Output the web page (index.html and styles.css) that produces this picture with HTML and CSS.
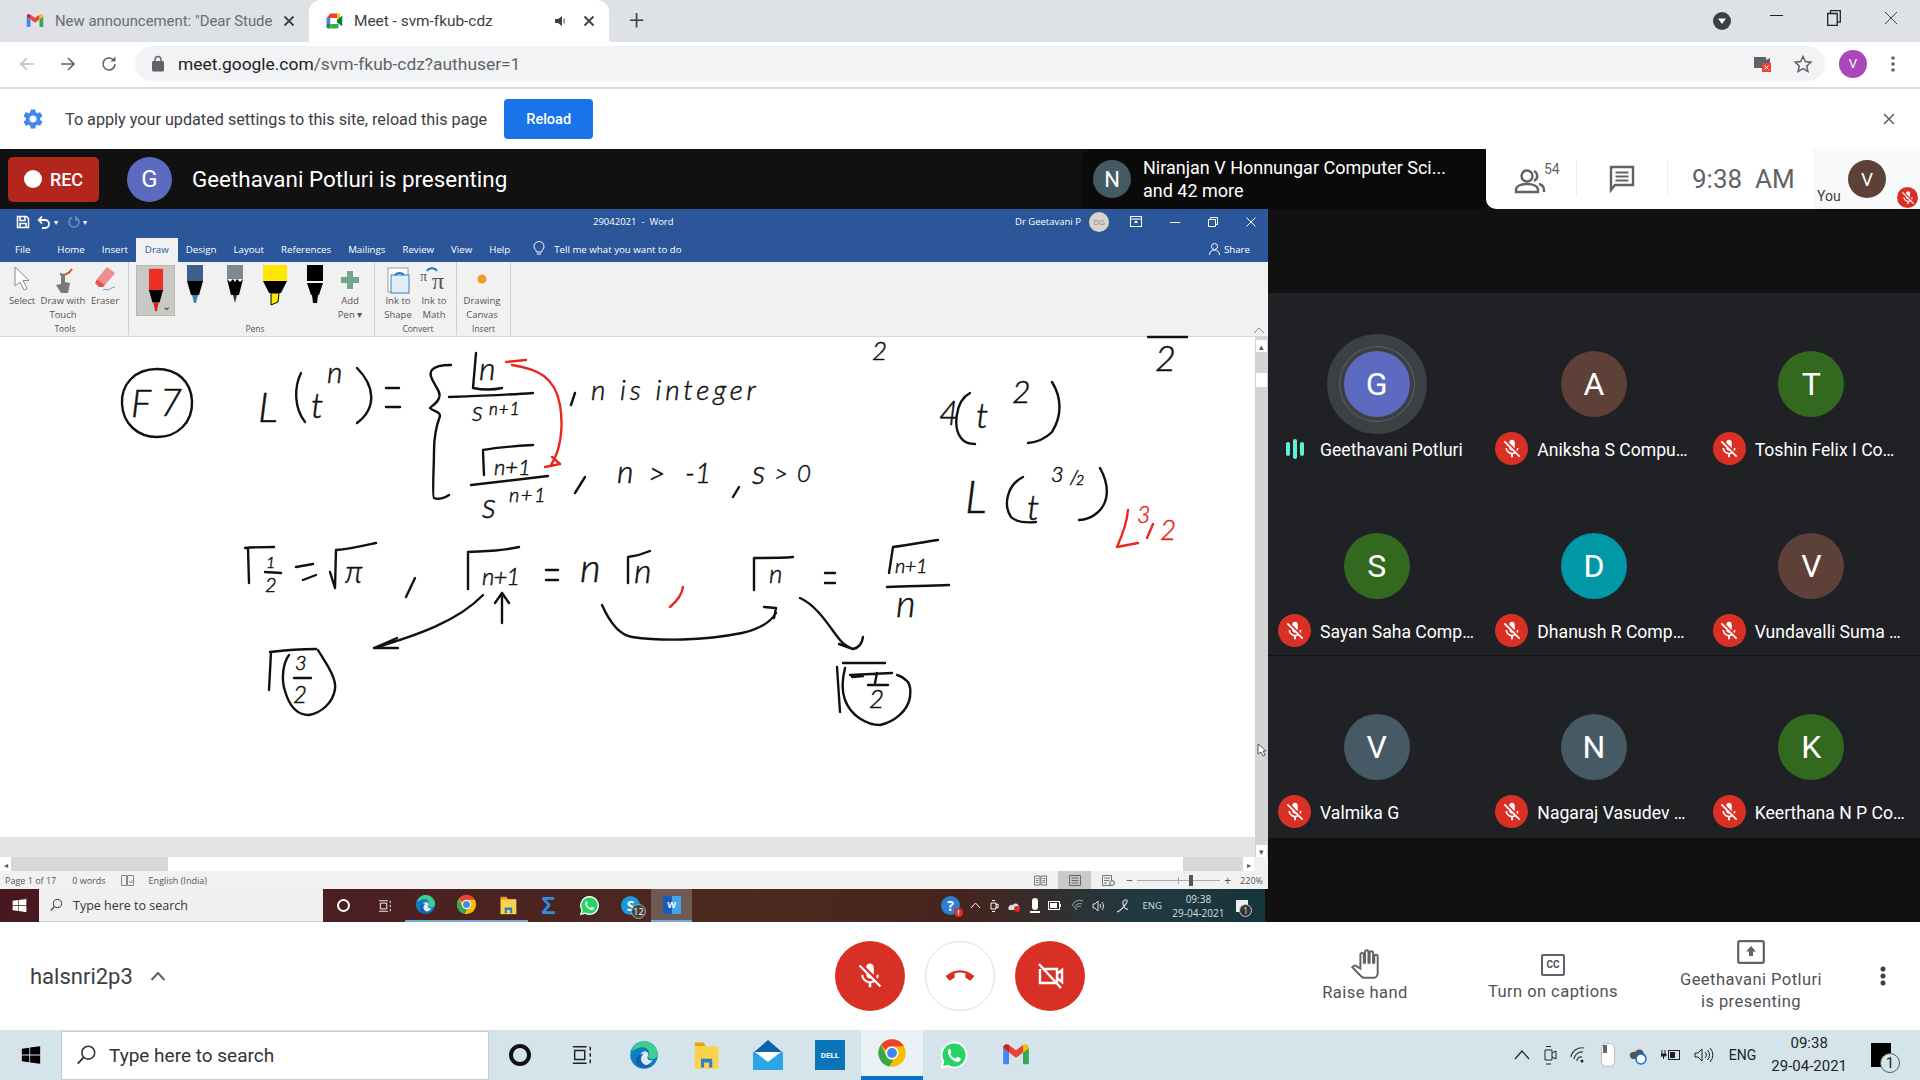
FILE: index.html
```html
<!DOCTYPE html>
<html lang="en">

<head>
    <meta charset="UTF-8">
    <title>Meet - svm-fkub-cdz</title>
    <link rel="stylesheet" href="styles.css">
</head>

<body>
    <!-- shared icons -->
    <svg class="defs" width="0" height="0">
        <symbol id="micoff" viewBox="0 0 24 24"><path fill="#fff" d="M19 11h-1.7c0 .74-.16 1.43-.43 2.05l1.23 1.23c.56-.98.9-2.09.9-3.28zm-4.02.17c0-.06.02-.11.02-.17V5c0-1.66-1.34-3-3-3S9 3.34 9 5v.18l5.98 5.99zM4.27 3L3 4.27l6.01 6.01V11c0 1.66 1.33 3 2.99 3 .22 0 .44-.03.65-.08l1.66 1.66c-.71.33-1.5.52-2.31.52-2.76 0-5.3-2.1-5.3-5.1H5c0 3.41 2.72 6.23 6 6.72V21h2v-3.28c.91-.13 1.77-.45 2.54-.9L19.73 21 21 19.73 4.27 3z"/></symbol>
        <symbol id="win" viewBox="0 0 24 24"><path fill="currentColor" d="M1 4.5l9-1.3v8.2H1zM11 3.1l12-1.7v10H11zM1 12.6h9v8.2l-9-1.3zM11 12.600h12v10l-12-1.700z"/></symbol>
        <symbol id="search" viewBox="0 0 24 24"><circle cx="14.5" cy="9.5" r="7" fill="none" stroke="currentColor" stroke-width="1.7"/><path d="M9.5 14.5L3 21.5" stroke="currentColor" stroke-width="2" fill="none"/></symbol>
        <symbol id="taskview" viewBox="0 0 24 24"><path fill="none" stroke="currentColor" stroke-width="1.6" d="M2 3h15M2 21h15M4 7h11v10H4zM21 3v4M21 10v4M21 17v4"/></symbol>
        <symbol id="edge" viewBox="0 0 24 24"><circle cx="12" cy="12" r="11" fill="#0f7dc2"/><path fill="#3dcf8e" d="M2 9C4 3 9 1 12 1c6 0 11 5 11 10 0 3-3 5-6 4-3-1-1-3-1-5 0-3-4-5-7-4-3 .7-5 2-7 3z"/><path fill="#fff" opacity=".85" d="M12 9c3 0 4 2 3 4-1 2 1 4 4 3-2 3-5 5-8 4-4-1-5-8 1-11z"/><path fill="#1360b0" d="M12 11c-2 1-3 4-2 6 1 3 5 4 8 3-3 3-8 3-11 0-3-4-1-9 5-9z"/></symbol>
        <symbol id="chrome" viewBox="0 0 24 24"><circle cx="12" cy="12" r="11" fill="#fbbc04"/><path fill="#ea4335" d="M12 1a11 11 0 0 1 9.5 5.5H12a5.5 5.5 0 0 0-5 3.2L3.3 5.4A11 11 0 0 1 12 1z"/><path fill="#34a853" d="M3.3 5.4L7.5 14.800a5.500 5.500 0 0 0 5.500 2.600L9.800 22.800A11 11 0 0 1 3.300 5.400z"/><circle cx="12" cy="12" r="5.2" fill="#fff"/><circle cx="12" cy="12" r="4" fill="#4285f4"/></symbol>
        <symbol id="folder" viewBox="0 0 24 24"><path fill="#e8a30e" d="M3 2h7l2 3H3z"/><rect x="3" y="5" width="19" height="18" fill="#fbd24e"/><path fill="#2d7fd0" d="M8 22v-7h9v7h-2.5v-4h-4v4z"/></symbol>
        <symbol id="whatsapp" viewBox="0 0 24 24"><path fill="#25d366" stroke="#fff" stroke-width="1.5" d="M12 2a10 10 0 0 0-8.500 15.200L2.200 22l4.900-1.300A10 10 0 1 0 12 2z"/><path fill="#fff" d="M8.600 6.800c-.5 0-1.500 1-1.500 2.700 0 3 3.800 7.400 7.400 7.900 1.600.2 2.800-1 3-1.900.1-.6 0-.8-.2-.9l-2.300-1.100c-.3-.1-.5 0-.7.200l-.8 1c-.2.200-.4.200-.7.100-1.800-.8-3-2-3.700-3.500-.1-.3 0-.4.100-.6l.6-.8c.1-.2.100-.4 0-.6l-1-2.200c-.1-.2-.3-.3-.7-.3z"/></symbol>
        <symbol id="gmail" viewBox="0 0 24 24"><path fill="#4285f4" d="M1 20V6l5 3.800V20z"/><path fill="#34a853" d="M18 20V9.800L23 6v14z"/><path fill="#ea4335" d="M6 9.800V3.500L12 8l6-4.500v6.300L12 14.300z"/><path fill="#c5221f" d="M1 6c0-3 3-4 5-2.500v6.300z"/><path fill="#fbbc04" d="M18 3.500C20 2 23 3 23 6l-5 3.800z"/></symbol>
        <symbol id="tabx" viewBox="0 0 12 12"><path d="M1.500 1.500l9 9M10.500 1.500l-9 9" stroke="#3c4043" stroke-width="1.800" fill="none"/></symbol>
    </svg>

    <div class="tabstrip">
        <div class="tab">
            <svg width="18" height="18"><use href="#gmail" /></svg>
            <span class="tab-title fade">New announcement: "Dear Stude</span>
            <svg class="tab-x" width="12" height="12"><use href="#tabx" /></svg>
        </div>
        <div class="tab tab-active">
            <svg width="18" height="18" viewBox="0 0 24 24">
                <path fill="#ea4335" d="M7 2h9v6H2z" />
                <path fill="#4285f4" d="M2 8h5v8H2z" />
                <path fill="#1e8e3e" d="M2 16h5v6H4c-1 0-2-1-2-2z" />
                <path fill="#fbbc04" d="M16 2h2c1 0 2 1 2 2v4h-4z" />
                <path fill="#34a853" d="M7 16h11v4c0 1-1 2-2 2H7z" />
                <path fill="#00832d" d="M16 10l7-5v14l-7-5z" />
            </svg>
            <span class="tab-title">Meet - svm-fkub-cdz</span>
            <svg class="tab-sound" width="14" height="14" viewBox="0 0 14 14"><path fill="#3c4043" d="M1 5h3l4-3v10L4 9H1z" /><path fill="none" stroke="#3c4043" d="M10 4.500v5" /></svg>
            <svg class="tab-x" width="12" height="12"><use href="#tabx" /></svg>
        </div>
        <span class="newtab">+</span>
        <span class="grow"></span>
        <svg class="profile-down" width="18" height="18" viewBox="0 0 18 18"><circle cx="9" cy="9" r="9" fill="#3c4043" /><path fill="#fff" d="M5 6.500h8L9 12z" /></svg>
        <span class="winbtn winmin"></span>
        <span class="winbtn winmax">
            <svg width="14" height="16"><path d="M.7 3.500h9.500v12H.7zM3.500 3.500V.7h9.800v11.500h-3" fill="none" stroke="#222" stroke-width="1.300" /></svg>
        </span>
        <span class="winbtn winclose">
            <svg width="16" height="16"><path d="M2 2l12 12M14 2L2 14" stroke="#3c4043" fill="none" /></svg>
        </span>
    </div>

    <div class="toolbar">
        <svg class="nav" width="18" height="18" viewBox="0 0 18 18"><path d="M16 9H3M9 3L3 9l6 6" fill="none" stroke="#bdc1c6" stroke-width="1.600" /></svg>
        <svg class="nav" width="18" height="18" viewBox="0 0 18 18"><path d="M2 9h13M9 3l6 6-6 6" fill="none" stroke="#5f6368" stroke-width="1.600" /></svg>
        <svg class="nav" width="18" height="18" viewBox="0 0 18 18"><path d="M15 9a6 6 0 1 1-1.800-4.300" fill="none" stroke="#5f6368" stroke-width="1.600" /><path fill="#5f6368" d="M15.500 1.500v5h-5z" /></svg>
        <div class="omnibox">
            <svg width="18" height="18" viewBox="0 0 24 24"><path fill="#5f6368" d="M18 8h-1V6c0-2.760-2.240-5-5-5S7 3.240 7 6v2H6c-1.100 0-2 .9-2 2v10c0 1.100.9 2 2 2h12c1.100 0 2-.9 2-2V10c0-1.100-.9-2-2-2zM9 6c0-1.660 1.340-3 3-3s3 1.340 3 3v2H9V6z" /></svg>
            <span class="url"><b>meet.google.com</b>/svm-fkub-cdz?authuser=1</span>
            <span class="grow"></span>
            <svg class="cam-blocked" width="20" height="20" viewBox="0 0 20 20"><rect x="1" y="3" width="12" height="11" fill="#5f6368" /><path fill="#5f6368" d="M13 6l4-2v8h-4z" /><rect x="9" y="9" width="9" height="9" fill="#ea4335" /><path d="M11.500 11.500l4 4M15.500 11.500l-4 4" stroke="#fff" /></svg>
            <svg class="star" width="20" height="20" viewBox="0 0 24 24"><path fill="none" stroke="#5f6368" stroke-width="1.800" d="M12 3l2.800 6.100 6.700.7-5 4.500 1.400 6.600L12 17.500l-5.900 3.400 1.400-6.600-5-4.500 6.700-.7z" /></svg>
        </div>
        <span class="chrome-avatar">V</span>
        <svg class="chrome-menu" width="4" height="16"><circle cx="2" cy="2" r="1.800" fill="#5f6368" /><circle cx="2" cy="8" r="1.800" fill="#5f6368" /><circle cx="2" cy="14" r="1.800" fill="#5f6368" /></svg>
    </div>

    <div class="infobar">
        <svg width="24" height="24" viewBox="0 0 24 24"><path fill="#4285f4" d="M19.140 12.940c.04-.3.06-.61.06-.94 0-.32-.02-.64-.07-.94l2.030-1.580c.18-.14.23-.41.12-.61l-1.920-3.320c-.12-.22-.37-.29-.59-.22l-2.390.96c-.5-.38-1.030-.7-1.620-.94l-.36-2.540c-.04-.24-.24-.41-.48-.41h-3.840c-.24 0-.43.17-.47.41l-.36 2.540c-.59.24-1.130.57-1.620.94l-2.390-.96c-.22-.08-.47 0-.59.22L2.740 8.870c-.12.21-.08.47.12.61l2.030 1.580c-.05.3-.09.63-.09.94s.02.64.07.94l-2.030 1.580c-.18.14-.23.41-.12.61l1.920 3.320c.12.22.37.29.59.22l2.390-.96c.5.38 1.030.7 1.620.94l.36 2.540c.05.24.24.41.48.41h3.840c.24 0 .44-.17.47-.41l.36-2.540c.59-.24 1.130-.56 1.620-.94l2.390.96c.22.08.47 0 .59-.22l1.920-3.320c.12-.22.07-.47-.12-.61l-2.010-1.580zM12 15.600c-1.980 0-3.600-1.620-3.600-3.600s1.620-3.600 3.600-3.600 3.600 1.620 3.600 3.600-1.620 3.600-3.600 3.600z" /></svg>
        <span class="info-text">To apply your updated settings to this site, reload this page</span>
        <button class="reload">Reload</button>
        <span class="grow"></span>
        <svg class="info-x" width="12" height="12"><path d="M1 1l10 10M11 1L1 11" stroke="#5f6368" stroke-width="1.600" fill="none" /></svg>
    </div>

    <div class="meetbar">
        <div class="rec"><span class="rec-dot"></span>REC</div>
        <span class="presenter-avatar">G</span>
        <span class="presenter-text">Geethavani Potluri is presenting</span>
        <span class="grow"></span>
        <div class="joined">
            <span class="joined-avatar">N</span>
            <div class="joined-text">
                <div>Niranjan V Honnungar Computer Sci...</div>
                <div>and 42 more</div>
            </div>
        </div>
        <div class="info-panel">
            <div class="people">
                <svg width="32" height="28" viewBox="0 0 32 28"><circle cx="13" cy="9" r="5.500" fill="none" stroke="#5f6368" stroke-width="2.400" /><path d="M2 25v-2c0-4 5-6 11-6s11 2 11 6v2z" fill="none" stroke="#5f6368" stroke-width="2.400" /><path d="M20 4a5.500 5.500 0 0 1 0 10M25 17c3 .8 5 3 5 6v2" fill="none" stroke="#5f6368" stroke-width="2.400" /></svg>
                <span class="people-count">54</span>
            </div>
            <div class="chat">
                <svg width="26" height="28" viewBox="0 0 26 28"><path d="M2 2h22v18H6l-4 5z" fill="none" stroke="#5f6368" stroke-width="2.400" /><path d="M6.500 7.500h13M6.500 11.500h13M6.500 15.500h13" stroke="#5f6368" stroke-width="2" /></svg>
            </div>
            <div class="clock">9:38&nbsp; AM</div>
            <div class="self">
                <span class="self-you">You</span>
                <span class="self-avatar">V</span>
                <span class="self-mic"><svg width="16" height="16"><use href="#micoff" /></svg></span>
            </div>
        </div>
    </div>

    <div class="stage">
        <div class="present">
            <div class="word-title">
                <svg class="qat" width="14" height="14" viewBox="0 0 14 14"><path fill="none" stroke="#fff" stroke-width="1.500" d="M1.500 1.500h9l2 2v9h-11zM4 1.500v4h5v-4M4 12.500v-4h6v4" /></svg>
                <svg class="qat" width="14" height="14" viewBox="0 0 14 14"><path fill="none" stroke="#fff" stroke-width="1.800" d="M2 5h6a4 4 0 0 1 0 8H5M5 1.500L1.800 5 5 8.500" /></svg>
                <span class="qat-small">&#9662;</span>
                <svg class="qat" width="12" height="14" viewBox="0 0 12 14"><path fill="none" stroke="#6f8fc0" stroke-width="1.500" d="M8 2.500a5 5 0 1 1-4 0M8 1v4h3" /></svg>
                <span class="qat-small">&#9662;</span>
                <span class="word-doc">29042021&nbsp; -&nbsp; Word</span>
                <span class="word-user">Dr Geetavani P</span>
                <span class="word-dg">DG</span>
                <svg class="word-ctl ctl-first" width="12" height="11"><rect x=".5" y=".5" width="11" height="10" fill="none" stroke="#fff" /><path d="M1 3h10" stroke="#fff" /><path d="M6 4l-2 3h4z" fill="#fff" /></svg>
                <svg class="word-ctl" width="10" height="10"><path d="M0 5.500h10" stroke="#fff" /></svg>
                <svg class="word-ctl" width="10" height="10"><path d="M.5 2.500h7v7h-7zM2.500 2.500v-2h7v7h-2" stroke="#fff" fill="none" /></svg>
                <svg class="word-ctl" width="10" height="10"><path d="M.5.5l9 9M9.500.5l-9 9" stroke="#fff" fill="none" /></svg>
            </div>
            <div class="word-tabs">
                <span class="wt wt-file">File</span>
                <span class="wt">Home</span>
                <span class="wt">Insert</span>
                <span class="wt wt-on">Draw</span>
                <span class="wt">Design</span>
                <span class="wt">Layout</span>
                <span class="wt">References</span>
                <span class="wt">Mailings</span>
                <span class="wt">Review</span>
                <span class="wt">View</span>
                <span class="wt">Help</span>
                <svg class="bulb" width="12" height="15" viewBox="0 0 12 15"><path d="M3.500 11C3 8.500 1 8 1 5.500a5 5 0 0 1 10 0c0 2.500-2 3-2.500 5.500zM4 13h4" fill="none" stroke="#fff" /></svg>
                <span class="wt-tell">Tell me what you want to do</span>
                <span class="grow"></span>
                <svg class="share-icon" width="11" height="12" viewBox="0 0 11 12"><circle cx="5.500" cy="3.500" r="3" fill="none" stroke="#fff" /><path d="M.5 12c0-3 2-5 5-5s5 2 5 5" fill="none" stroke="#fff" /></svg>
                <span class="wt-share">Share</span>
            </div>
            <div class="ribbon">
                <div class="rgroup rg-tools">
                    <div class="rg-items">
                        <div class="ritem ri-40">
                            <svg width="18" height="30" viewBox="0 0 18 30"><path d="M2 2v19l5-4 4 8 3-1.500-4-8h6z" fill="#fff" stroke="#888" /></svg>
                            <span>Select</span>
                        </div>
                        <div class="ritem ri-42">
                            <svg width="24" height="30" viewBox="0 0 24 30"><path d="M9 9c4 2 9 0 12-5" fill="none" stroke="#d2532d" stroke-width="2" /><path d="M10 9v10l-5 1 5 8h7l2-10-5-1V9z" fill="#7a7a7a" /></svg>
                            <span>Draw with<br>Touch</span>
                        </div>
                        <div class="ritem ri-42">
                            <svg width="24" height="30" viewBox="0 0 24 30"><path d="M14 2l8 6-10 12-8-6z" fill="#ee8d8d" /><path d="M4 14l8 6-2 2H6l-4-4z" fill="#e05252" /><path d="M10 25c3-2 5 1 7-1s3-1 5-2" fill="none" stroke="#6a9cc8" /></svg>
                            <span>Eraser</span>
                        </div>
                    </div>
                    <div class="rg-label">Tools</div>
                </div>
                <div class="rgroup rg-pens">
                    <div class="rg-items">
                        <div class="pen pen-on">
                            <svg width="24" height="46" viewBox="0 0 24 52"><rect x="4" y="2" width="16" height="24" fill="#ee2f24" /><path d="M4 26h16l-4 14H8z" fill="#000" /><path d="M9 40h6l-2 10h-2z" fill="#d4241a" /></svg>
                            <span class="pen-arrow">&#8964;</span>
                        </div>
                        <div class="pen">
                            <svg width="24" height="44" viewBox="0 0 24 44"><rect x="4" y="0" width="16" height="16" fill="#3a5f8c" /><path d="M4 16h16l-4 14H8z" fill="#000" /><path d="M9 30h6l-2 8h-2z" fill="#2f8aa8" /></svg>
                        </div>
                        <div class="pen">
                            <svg width="24" height="44" viewBox="0 0 24 44"><rect x="4" y="0" width="16" height="14" fill="#7c8a90" /><path d="M4 14l3 3 3-3 2 3 2-3 3 3 3-3-4 16H8z" fill="#000" /><path d="M10 30h4l-2 8z" fill="#333" /></svg>
                        </div>
                        <div class="pen">
                            <svg width="28" height="44" viewBox="0 0 28 44"><rect x="2" y="0" width="24" height="16" fill="#ffe800" /><path d="M2 16h24l-6 12H8z" fill="#000" /><path d="M10 28h8l-1 9-7 3z" fill="#ffe800" stroke="#000" /></svg>
                        </div>
                        <div class="pen">
                            <svg width="24" height="44" viewBox="0 0 24 44"><rect x="4" y="0" width="16" height="16" fill="#000" /><path d="M4 18h16l-4 12H8z" fill="#000" /><path d="M9 30h6l-1 8h-4z" fill="#000" /></svg>
                        </div>
                        <div class="ritem ri-30 addpen">
                            <svg width="18" height="30" viewBox="0 0 18 30"><path d="M6 6h6v6h6v6h-6v6H6v-6H0v-6h6z" fill="#6fa78f" /></svg>
                            <span>Add<br>Pen &#9662;</span>
                        </div>
                    </div>
                    <div class="rg-label">Pens</div>
                </div>
                <div class="rgroup rg-convert">
                    <div class="rg-items">
                        <div class="ritem ri-36">
                            <svg width="26" height="30" viewBox="0 0 26 30"><rect x="3" y="3" width="20" height="24" fill="#fff" stroke="#9a9a9a" /><rect x="6" y="10" width="18" height="18" fill="#dfeef9" stroke="#3a7fc2" /><path d="M10 10a6 6 0 0 1 9 0" fill="none" stroke="#2f77bd" stroke-width="2" /></svg>
                            <span>Ink to<br>Shape</span>
                        </div>
                        <div class="ritem ri-36">
                            <svg class="ink-math" width="30" height="30" viewBox="0 0 30 30"><text class="pi-big" x="13" y="24">&#960;</text><text class="pi-small" x="1" y="16">&#960;</text><path d="M8 6a6 6 0 0 1 10 0" fill="none" stroke="#2f77bd" stroke-width="2" /></svg>
                            <span>Ink to<br>Math</span>
                        </div>
                    </div>
                    <div class="rg-label">Convert</div>
                </div>
                <div class="rgroup rg-insert">
                    <div class="rg-items">
                        <div class="ritem ri-50">
                            <svg width="18" height="30" viewBox="0 0 18 30"><circle cx="9" cy="14" r="4.500" fill="#f59a23" /></svg>
                            <span>Drawing<br>Canvas</span>
                        </div>
                    </div>
                    <div class="rg-label">Insert</div>
                </div>
                <span class="grow"></span>
                <svg class="ribbon-up" width="12" height="7"><path d="M1 6l5-5 5 5" fill="none" stroke="#8a8a8a" /></svg>
            </div>
            <div class="doc">
                <!-- the ink on the page: strokes are drawn, the letters stay text -->
                <svg class="ink" width="1255" height="500" viewBox="0 337 1255 500">
                    <g class="stroke">
                        <path d="M157 369c-22 0-36 15-35 35 1 20 16 33 35 33 20 0 36-14 35-36-1-20-15-32-35-32z" />
                        <path d="M301 373c-7 14-7 35 4 49M357 368c18 18 20 40 0 55" />
                        <path d="M386 388h13M386 407h14" />
                        <path d="M451 365c-22 0-22 8-19 14 3 7 10 14 7 19-2 6-9 9-9 10 4 4 10 3 10 8-3 8-6 22-6 35 0 16-2 46 0 47 4 2 11 0 15-3" />
                        <path d="M476 353l-3 35c10 2 20 2 29 0" />
                        <path d="M449 397c28-1 56-2 84-4" />
                        <path d="M483 452l1 23M483 450c17-3 33-4 50-5" />
                        <path d="M471 485c26-3 52-6 77-9" />
                        <path d="M575 393l-4 12M585 477l-10 16M739 487l-6 10" />
                        <path d="M245 548c10-1 19-1 29-1M248 548l1 35" />
                        <path d="M265 572c5 0 12 1 16 1" />
                        <path d="M296 567l17-3M303 580l13-5" />
                        <path d="M330 572l5 16 1-38c13-1 26-4 40-7" />
                        <path d="M415 578l-9 19" />
                        <path d="M468 589V552c17-1 34-1 51-5" />
                        <path d="M546 570h12M546 580h12" />
                        <path d="M628 583V557c8-1 15-3 22-6" />
                        <path d="M754 590V558c14 0 27 0 39-1" />
                        <path d="M825 573h10M825 583h10" />
                        <path d="M502 623V593M495 603l7-10 7 10" />
                        <path d="M483 595c-25 26-65 40-109 53M397 638l-23 10 24 0" />
                        <path d="M602 605c8 18 17 30 30 32 28 4 70 4 110-4 18-4 28-10 34-20M764 607l12 1-2 10" />
                        <path d="M800 598c18 8 30 30 40 42 4 5 8 7 13 9 5-1 9-5 10-12M839 644l14 5" />
                        <path d="M270 652c16-2 32-3 46-3M271 652l-2 38" />
                        <path d="M289 655c-6 8-8 24-4 36 4 14 12 24 24 24 12-2 24-12 26-26 2-12-12-30-17-39" />
                        <path d="M294 678h17" />
                        <path d="M843 663h42M837 667l3 45" />
                        <path d="M845 668c-3 12-3 24 0 32 6 16 22 25 35 25 14-3 28-14 30-28 1-8 0-12-2-15-3-3-7-6-11-7" />
                        <path d="M852 677l11-1M850 675l42-2M877 673l-2 10M868 685h20" />
                        <path d="M1148 337h39" />
                        <path d="M970 393c-15 8-17 35-9 45 3 4 8 6 14 6M1052 382c10 16 10 34 0 50-6 6-14 10-24 11" />
                        <path d="M1023 477c-16 8-20 28-12 40 5 5 14 6 25 5M1100 468c10 18 9 35-3 45-6 5-12 7-18 7" />
                        <path d="M887 587c20-1 40-1 62-2M889 573l4-26c16-2 30-5 45-7" />
                    </g>
                    <g class="stroke stroke-red">
                        <path d="M506 362l20-2M512 365c26 4 43 12 48 40 4 24 0 46-9 60M545 467l15-3-8-7" />
                        <path d="M683 587c-1 8-6 14-13 20" />
                        <path d="M1128 510c-1 12-7 28-11 37l21-4" />
                        <path d="M1147 538l6-14" />
                    </g>
                    <g class="letters">
                        <text x="131" y="417" font-size="38">F</text>
                        <text x="160" y="416" font-size="38">7</text>
                        <text x="258" y="422" font-size="42">L</text>
                        <text x="311" y="418" font-size="36">t</text>
                        <text x="327" y="383" font-size="30">n</text>
                        <text x="479" y="380" font-size="32">n</text>
                        <text x="472" y="421" font-size="28">s</text>
                        <text x="489" y="415" font-size="17" letter-spacing="1">n+1</text>
                        <text x="591" y="400" font-size="28" letter-spacing="3.8">n is integer</text>
                        <text x="494" y="475" font-size="22">n+1</text>
                        <text x="482" y="518" font-size="36">s</text>
                        <text x="509" y="502" font-size="20" letter-spacing="1.5">n+1</text>
                        <text x="617" y="483" font-size="32">n</text>
                        <text x="648" y="484" font-size="30">&gt;</text>
                        <text x="685" y="483" font-size="28">-1</text>
                        <text x="752" y="484" font-size="34">s</text>
                        <text x="774" y="482" font-size="24">&gt;</text>
                        <text x="797" y="482" font-size="24">0</text>
                        <text x="266" y="568" font-size="16">1</text>
                        <text x="265" y="592" font-size="20">2</text>
                        <text x="345" y="583" font-size="32">&#960;</text>
                        <text x="482" y="585" font-size="24" letter-spacing="-1">n+1</text>
                        <text x="580" y="582" font-size="40">n</text>
                        <text x="634" y="583" font-size="34">n</text>
                        <text x="769" y="583" font-size="26">n</text>
                        <text x="295" y="670" font-size="20">3</text>
                        <text x="293" y="703" font-size="24">2</text>
                        <text x="869" y="708" font-size="26">2</text>
                        <text x="872" y="360" font-size="26">2</text>
                        <text x="1155" y="371" font-size="36">2</text>
                        <text x="939" y="425" font-size="34">4</text>
                        <text x="976" y="428" font-size="36">t</text>
                        <text x="1012" y="403" font-size="32">2</text>
                        <text x="965" y="513" font-size="46">L</text>
                        <text x="1027" y="520" font-size="36">t</text>
                        <text x="1051" y="482" font-size="22">3</text>
                        <text x="1070" y="484" font-size="20">/</text>
                        <text x="1076" y="485" font-size="14">2</text>
                        <text x="895" y="573" font-size="20" letter-spacing="-.5">n+1</text>
                        <text x="896" y="617" font-size="38">n</text>
                    </g>
                    <g class="letters letters-red">
                        <text x="1137" y="523" font-size="23">3</text>
                        <text x="1160" y="540" font-size="28">2</text>
                    </g>
                </svg>
                <div class="vscroll">
                    <span class="sb-btn">&#9652;</span>
                    <span class="sb-thumb"></span>
                    <span class="grow"></span>
                    <span class="sb-btn sb-down">&#9662;</span>
                </div>
                <svg class="cursor" width="10" height="14" viewBox="0 0 10 14"><path d="M1 1v10l3-2 2 4 2-1-2-4h3z" fill="#fff" stroke="#333" stroke-width=".8" /></svg>
            </div>
            <div class="graybar"></div>
            <div class="hscroll">
                <span class="hs-btn">&#9666;</span>
                <span class="hs-left"></span>
                <span class="hs-thumb"></span>
                <span class="hs-right"></span>
                <span class="hs-btn">&#9656;</span>
            </div>
            <div class="word-status">
                <span>Page 1 of 17</span>
                <span class="st-words">0 words</span>
                <svg class="st-book" width="13" height="11"><path d="M.5 .5h5v10h-5zM6.500 .5h6v10h-6zM8 6l2 2 3-4" fill="none" stroke="#888" /></svg>
                <span class="st-lang">English (India)</span>
                <span class="grow"></span>
                <svg width="13" height="11"><path d="M.5 1h5.500v9H.5zM7 1h5.500v9H7zM2 3.500h2.500M2 5.500h2.500M2 7.500h2.500M8.500 3.500H11M8.500 5.500H11M8.500 7.500H11" fill="none" stroke="#777" /></svg>
                <span class="st-print"><svg width="12" height="11"><path d="M.5.5h11v10H.5zM2.500 3h7M2.500 5.500h7M2.500 8h7" fill="none" stroke="#666" /></svg></span>
                <svg class="st-web" width="13" height="11"><path d="M.5.5h9v10h-9zM2 3h6M2 5.500h5M2 8h3" fill="none" stroke="#777" /><circle cx="10" cy="8" r="2.500" fill="#ddd" stroke="#777" /></svg>
                <span class="st-minus">&minus;</span>
                <span class="st-slider"><span class="st-tick"></span><span class="st-knob"></span></span>
                <span class="st-plus">+</span>
                <span class="st-zoom">220%</span>
            </div>
            <div class="wintask">
                <span class="wt-start"><svg width="15" height="15"><use href="#win" /></svg></span>
                <div class="wt-search">
                    <svg width="14" height="14"><use href="#search" /></svg>
                    <span>Type here to search</span>
                </div>
                <div class="wt-icons">
                    <span class="wi"><span class="cortana small"></span></span>
                    <span class="wi"><svg width="14" height="14"><use href="#taskview" /></svg></span>
                    <span class="wi wi-run"><svg width="21" height="21"><use href="#edge" /></svg></span>
                    <span class="wi wi-run"><svg width="21" height="21"><use href="#chrome" /></svg></span>
                    <span class="wi wi-run"><svg width="20" height="20"><use href="#folder" /></svg></span>
                    <span class="wi"><span class="sigma">&#931;</span></span>
                    <span class="wi"><svg width="21" height="21"><use href="#whatsapp" /></svg></span>
                    <span class="wi">
                        <span class="skype">S</span>
                        <span class="skype-num">12</span>
                    </span>
                    <span class="wi wi-word wi-run"><span class="word-logo">W</span></span>
                </div>
                <span class="grow"></span>
                <div class="wt-tray">
                    <span class="help">?<span class="help-dot">!</span></span>
                    <svg width="11" height="7"><path d="M1 6l4.500-5L10 6" fill="none" stroke="#fff" /></svg>
                    <svg width="9" height="14"><path d="M1 4h5v6H1zM6 6l2-1v4l-2-1M2 1.500h3M2 12.500h3" fill="none" stroke="#fff" /></svg>
                    <svg width="14" height="12"><path d="M2 10c-2-3 1-6 4-5 2-3 6-1 6 2 2 1 1 3 0 3z" fill="#ddd" /><circle cx="10" cy="9" r="3" fill="#d93025" /></svg>
                    <svg width="10" height="16"><rect x="2" y="0" width="6" height="12" rx="3" fill="#fff" /><path d="M0 14h10" stroke="#fff" stroke-width="2" /></svg>
                    <svg width="14" height="9"><rect x=".5" y=".5" width="11" height="8" fill="none" stroke="#fff" /><rect x="2" y="2" width="7" height="5" fill="#fff" /><path d="M12.500 3v3" stroke="#fff" /></svg>
                    <svg width="13" height="13"><path d="M1 7a8 8 0 0 1 11-5M3 9a6 6 0 0 1 8-4M5 11a3 3 0 0 1 5-3" fill="none" stroke="#9aa" /></svg>
                    <svg width="14" height="12"><path d="M1 4h2l3-3v10L3 8H1zM8 4a3 3 0 0 1 0 4M10 2a6 6 0 0 1 0 8" fill="none" stroke="#ddd" /></svg>
                    <svg width="16" height="16"><path d="M2 14c4-1 9-8 10-10 1-3-3-3-4 0s2 8 5 7" fill="none" stroke="#ddd" stroke-width="1.200" /></svg>
                    <span class="wt-eng">ENG</span>
                    <span class="wt-clock">09:38<br>29-04-2021</span>
                    <span class="wt-notif"><span class="notif-num">1</span></span>
                </div>
            </div>
        </div>
        <div class="side">
            <div class="tiles">
                <div class="tile">
                    <span class="ava ava-speak ava-blue">G</span>
                    <div class="tname">
                        <span class="talk"><i></i><i></i><i></i></span>
                        <span>Geethavani Potluri</span>
                    </div>
                </div>
                <div class="tile">
                    <span class="ava ava-brown">A</span>
                    <div class="tname">
                        <span class="mute"><svg width="22" height="22"><use href="#micoff" /></svg></span>
                        <span>Aniksha S Compu…</span>
                    </div>
                </div>
                <div class="tile">
                    <span class="ava ava-green">T</span>
                    <div class="tname">
                        <span class="mute"><svg width="22" height="22"><use href="#micoff" /></svg></span>
                        <span>Toshin Felix I Co…</span>
                    </div>
                </div>
                <div class="tile tile-line">
                    <span class="ava ava-green">S</span>
                    <div class="tname">
                        <span class="mute"><svg width="22" height="22"><use href="#micoff" /></svg></span>
                        <span>Sayan Saha Comp…</span>
                    </div>
                </div>
                <div class="tile tile-line">
                    <span class="ava ava-teal">D</span>
                    <div class="tname">
                        <span class="mute"><svg width="22" height="22"><use href="#micoff" /></svg></span>
                        <span>Dhanush R Comp…</span>
                    </div>
                </div>
                <div class="tile tile-line">
                    <span class="ava ava-brown">V</span>
                    <div class="tname">
                        <span class="mute"><svg width="22" height="22"><use href="#micoff" /></svg></span>
                        <span>Vundavalli Suma …</span>
                    </div>
                </div>
                <div class="tile">
                    <span class="ava ava-slate">V</span>
                    <div class="tname">
                        <span class="mute"><svg width="22" height="22"><use href="#micoff" /></svg></span>
                        <span>Valmika G</span>
                    </div>
                </div>
                <div class="tile">
                    <span class="ava ava-slate">N</span>
                    <div class="tname">
                        <span class="mute"><svg width="22" height="22"><use href="#micoff" /></svg></span>
                        <span>Nagaraj Vasudev …</span>
                    </div>
                </div>
                <div class="tile">
                    <span class="ava ava-green">K</span>
                    <div class="tname">
                        <span class="mute"><svg width="22" height="22"><use href="#micoff" /></svg></span>
                        <span>Keerthana N P Co…</span>
                    </div>
                </div>
            </div>
        </div>
    </div>

    <div class="controls">
        <div class="code">
            <span>halsnri2p3</span>
            <svg width="16" height="10"><path d="M1.500 9L8 2l6.500 7" fill="none" stroke="#5f6368" stroke-width="2" /></svg>
        </div>
        <div class="callbtns">
            <span class="cbtn cbtn-red"><svg width="30" height="30"><use href="#micoff" /></svg></span>
            <span class="cbtn cbtn-end">
                <svg width="28" height="28" viewBox="0 0 24 24"><path fill="#d93025" d="M12 9c-1.600 0-3.150.25-4.600.72v3.100c0 .39-.23.74-.56.9-.98.49-1.870 1.120-2.660 1.850-.18.18-.43.28-.7.28-.28 0-.53-.11-.71-.29L.29 13.080c-.18-.17-.29-.42-.29-.7 0-.28.11-.53.29-.71C3.340 8.780 7.460 7 12 7s8.660 1.780 11.710 4.670c.18.18.29.43.29.71 0 .28-.11.53-.29.71l-2.480 2.480c-.18.18-.43.29-.71.29-.27 0-.52-.11-.7-.28-.79-.74-1.690-1.360-2.670-1.850-.33-.16-.56-.5-.56-.9v-3.100C15.150 9.250 13.600 9 12 9z" /></svg>
            </span>
            <span class="cbtn cbtn-red">
                <svg width="30" height="30" viewBox="0 0 30 30"><path d="M9 8h13v14H5V8M22 13l5-4v12l-5-4M4 3l22 24" fill="none" stroke="#fff" stroke-width="2.400" /></svg>
            </span>
        </div>
        <div class="act act-hand">
            <svg width="30" height="32" viewBox="-1 -1 26 26"><path fill="none" stroke="#5f6368" stroke-width="1.700" d="M23 5.500V20c0 2.200-1.800 4-4 4h-7.300c-1.080 0-2.100-.43-2.850-1.190L1 14.830s1.260-1.230 1.300-1.250c.22-.19.49-.29.79-.29.22 0 .42.06.6.16.04.01 4.310 2.460 4.310 2.460V4c0-.83.67-1.500 1.500-1.500S11 3.170 11 4v7h1V1.500c0-.83.67-1.500 1.500-1.500S15 .67 15 1.500V11h1V2.500c0-.83.67-1.500 1.500-1.500s1.500.67 1.500 1.500V11h1V5.500c0-.83.67-1.500 1.500-1.500s1.500.67 1.500 1.500z" /></svg>
            <span>Raise hand</span>
        </div>
        <div class="act act-cc">
            <span class="cc-box">CC</span>
            <span>Turn on captions</span>
        </div>
        <div class="act act-present">
            <svg width="28" height="24" viewBox="0 0 28 24"><rect x="1.200" y="1.200" width="25.600" height="21.600" rx="1.500" fill="none" stroke="#5f6368" stroke-width="2.200" /><path fill="#5f6368" d="M14 6l5 5.500h-3V16h-4v-4.500H9z" /></svg>
            <span>Geethavani Potluri<br>is presenting</span>
        </div>
        <svg class="ctl-more" width="6" height="20"><circle cx="3" cy="3" r="2.500" fill="#3c4043" /><circle cx="3" cy="10" r="2.500" fill="#3c4043" /><circle cx="3" cy="17" r="2.500" fill="#3c4043" /></svg>
    </div>

    <div class="taskbar">
        <span class="tb-start"><svg width="20" height="20"><use href="#win" /></svg></span>
        <div class="tb-search">
            <svg width="22" height="22"><use href="#search" /></svg>
            <span>Type here to search</span>
        </div>
        <div class="tb-icons">
            <span class="ti"><span class="cortana"></span></span>
            <span class="ti"><svg width="22" height="22"><use href="#taskview" /></svg></span>
            <span class="ti"><svg width="30" height="30"><use href="#edge" /></svg></span>
            <span class="ti"><svg width="30" height="30"><use href="#folder" /></svg></span>
            <span class="ti">
                <svg width="30" height="30" viewBox="0 0 30 30"><path fill="#0a62ad" d="M15 0l15 13H0z" /><rect y="12" width="30" height="18" fill="#2ba4e8" /><path fill="#fff" d="M2 12h26L15 22z" /></svg>
            </span>
            <span class="ti"><span class="dell">DELL</span></span>
            <span class="ti ti-on"><svg width="30" height="30"><use href="#chrome" /></svg></span>
            <span class="ti"><svg width="30" height="30"><use href="#whatsapp" /></svg></span>
            <span class="ti"><svg width="28" height="28"><use href="#gmail" /></svg></span>
        </div>
        <span class="grow"></span>
        <div class="tb-tray">
            <svg width="16" height="10"><path d="M1 9l7-8 7 8" fill="none" stroke="#222" stroke-width="1.200" /></svg>
            <svg width="14" height="22"><path d="M2 6h7v10H2zM9 9l4-2v8l-4-2M3 2.500h5M3 20h5" fill="none" stroke="#222" /></svg>
            <svg width="18" height="18"><path d="M1 11a11 11 0 0 1 13-9M4 13a8 8 0 0 1 9-7M7 15a4 4 0 0 1 5-4" fill="none" stroke="#333" stroke-width="1.200" /><circle cx="12" cy="15" r="1.500" fill="#222" /></svg>
            <svg width="14" height="24"><rect x=".5" y=".5" width="13" height="23" rx="5" fill="#fff" stroke="#bbb" /><rect x="2" y="2" width="4" height="8" fill="#666" /></svg>
            <svg width="20" height="20"><path d="M3 13c-3-3 0-7 4-6 3-5 9-2 9 2 3 1 2 5 0 5H4z" fill="#555" /><circle cx="13" cy="14" r="5" fill="#fff" stroke="#0a6fd6" stroke-width="1.500" /></svg>
            <svg width="20" height="14"><path d="M1 2v4M4 2v4M0 6h5v2H0zM2.500 8v3" stroke="#222" fill="#222" /><rect x="7.500" y="2.500" width="11" height="9" fill="none" stroke="#222" /><rect x="9" y="4" width="5" height="6" fill="#222" /></svg>
            <svg width="20" height="16"><path d="M1 6h3l4-4v12l-4-4H1zM11 5a4 4 0 0 1 0 6M13.500 3a8 8 0 0 1 0 10M16 1a10 10 0 0 1 0 14" fill="none" stroke="#222" /></svg>
            <span class="tb-eng">ENG</span>
            <span class="tb-clock">09:38<br>29-04-2021</span>
            <span class="tb-notif"><span class="tb-notif-num">1</span></span>
        </div>
    </div>
</body>

</html>
```

FILE: styles.css
```css
* {
    box-sizing: border-box;
}

body {
    margin: 0;
    width: 1920px;
    height: 1080px;
    overflow: hidden;
    display: flex;
    flex-direction: column;
    font-family: 'Roboto', 'Liberation Sans', sans-serif;
    background-color: #fff;
}

.defs {
    position: absolute;
}

.grow {
    flex: 1;
}

svg {
    flex: none;
}

/* browser tabs */
.tabstrip {
    height: 42px;
    flex: none;
    display: flex;
    align-items: center;
    background-color: #dee1e6;
    color: #3c4043;
}

.tab {
    width: 309px;
    height: 42px;
    padding-left: 26px;
    display: flex;
    align-items: center;
    font-size: 15.4px;
}

.tab-title {
    margin-left: 11px;
    width: 217px;
    white-space: nowrap;
}

.fade {
    font-size: 14.9px;
    color: #6a6d71;
}

.tab-x {
    margin-left: 11px;
}

.tab-active {
    width: 300px;
    padding-left: 16px;
    background-color: #fff;
    border-radius: 12px 12px 0 0;
}

.tab-active .tab-title {
    margin-left: 11px;
    width: 200px;
}

.tab-active .tab-x {
    margin-left: 15px;
}

.newtab {
    margin-left: 20px;
    font-size: 27px;
    font-weight: 300;
    color: #3c4043;
}

.profile-down {
    margin-right: 17px;
}

.winbtn {
    width: 57px;
    display: flex;
    justify-content: center;
}

.winmin::before {
    content: "";
    width: 13px;
    height: 1px;
    margin-top: -6px;
    background-color: #222;
}

.winmax svg {
    margin-top: -6px;
}

.winclose {
    margin-right: 0;
    width: 58px;
    margin-top: -6px;
}

/* address bar */
.toolbar {
    height: 47px;
    flex: none;
    padding: 5px 0 7px 18px;
    display: flex;
    align-items: center;
    border-bottom: 2px solid #dadce0;
    background-color: #fff;
}

.nav {
    margin-right: 23px;
}

.omnibox {
    margin-left: -6px;
    width: 1690px;
    height: 35px;
    padding: 0 12px 0 14px;
    display: flex;
    align-items: center;
    border-radius: 18px;
    background-color: #f1f3f4;
}

.url {
    margin-left: 11px;
    font-size: 17.4px;
    color: #5f6368;
}

.url b {
    font-weight: 400;
    color: #202124;
}

.cam-blocked {
    margin-right: 20px;
}

.chrome-avatar {
    margin-left: 14px;
    width: 28px;
    height: 28px;
    display: flex;
    align-items: center;
    justify-content: center;
    border-radius: 50%;
    font-size: 13px;
    color: #fff;
    background-color: #ab47bc;
}

.chrome-menu {
    margin-left: 24px;
}

/* settings infobar */
.infobar {
    height: 60px;
    flex: none;
    padding: 0 25px 0 21px;
    display: flex;
    align-items: center;
    background-color: #fff;
}

.info-text {
    margin-left: 20px;
    font-size: 16.2px;
    color: #3c4043;
}

.reload {
    margin-left: 17px;
    width: 89px;
    height: 40px;
    border: none;
    border-radius: 4px;
    font-family: inherit;
    font-size: 14.5px;
    font-weight: 500;
    color: #fff;
    background-color: #1a73e8;
}

/* meet header */
.meetbar {
    height: 60px;
    flex: none;
    padding-left: 8px;
    display: flex;
    align-items: center;
    color: #fff;
    background-color: #111;
}

.rec {
    width: 91px;
    height: 45px;
    display: flex;
    align-items: center;
    justify-content: center;
    gap: 8px;
    border-radius: 5px;
    font-size: 18px;
    font-weight: 500;
    background-color: #b3261e;
}

.rec-dot {
    width: 18px;
    height: 18px;
    border-radius: 50%;
    background-color: #fff;
}

.presenter-avatar {
    margin-left: 28px;
    width: 45px;
    height: 45px;
    display: flex;
    align-items: center;
    justify-content: center;
    border-radius: 50%;
    font-size: 24px;
    background-color: #5c6bc0;
}

.presenter-text {
    margin-left: 20px;
    font-size: 22.4px;
}

.joined {
    width: 404px;
    height: 60px;
    padding-left: 11px;
    display: flex;
    align-items: center;
    border-radius: 10px 0 0 0;
    background-color: #0a0a0a;
}

.joined-avatar {
    width: 38px;
    height: 38px;
    display: flex;
    align-items: center;
    justify-content: center;
    border-radius: 50%;
    font-size: 22px;
    background-color: #455a64;
}

.joined-text {
    margin-left: 12px;
    font-size: 18px;
    line-height: 23px;
}

.info-panel {
    width: 434px;
    height: 60px;
    display: flex;
    align-items: center;
    border-radius: 0 0 0 10px;
    color: #5f6368;
    background-color: #fff;
}

.people {
    width: 91px;
    height: 36px;
    padding-left: 28px;
    display: flex;
    align-items: flex-start;
    border-right: 1px solid #eceff1;
}

.people svg {
    margin-top: 6px;
}

.people-count {
    margin-left: -2px;
    font-size: 14px;
}

.chat {
    width: 91px;
    height: 36px;
    display: flex;
    align-items: center;
    justify-content: center;
    border-right: 1px solid #eceff1;
}

.clock {
    width: 145px;
    padding-left: 24px;
    font-size: 26px;
    white-space: nowrap;
}

.self {
    position: relative;
    flex: 1;
    height: 60px;
    background-color: #f8f9fa;
}

.self-you {
    position: absolute;
    left: 4px;
    top: 39px;
    font-size: 14px;
    color: #3c4043;
}

.self-avatar {
    position: absolute;
    left: 35px;
    top: 11px;
    width: 38px;
    height: 38px;
    display: flex;
    align-items: center;
    justify-content: center;
    border-radius: 50%;
    font-size: 19px;
    color: #fff;
    background-color: #5d4037;
}

.self-mic {
    position: absolute;
    left: 84px;
    top: 38px;
    width: 21px;
    height: 21px;
    display: flex;
    align-items: center;
    justify-content: center;
    border-radius: 50%;
    background-color: #d93025;
}

/* shared screen + tiles */
.stage {
    height: 713px;
    flex: none;
    display: flex;
    background-color: #111;
}

.present {
    width: 1268px;
    display: flex;
    flex-direction: column;
    font-family: 'Open Sans', 'Liberation Sans', sans-serif;
    color: #fff;
}

.word-title {
    height: 28px;
    flex: none;
    padding: 0 0 3px 12px;
    display: flex;
    align-items: center;
    font-size: 9.5px;
    background-color: #2b579a;
}

.qat {
    margin-right: 3px;
    margin-left: 4px;
}

.qat-small {
    margin-right: 6px;
    font-size: 8px;
}

.word-doc {
    margin-left: 500px;
    width: 422px;
    white-space: nowrap;
}

.word-user {
    width: 65px;
    white-space: nowrap;
}

.word-dg {
    margin-left: 9px;
    width: 20px;
    height: 20px;
    display: flex;
    align-items: center;
    justify-content: center;
    border-radius: 50%;
    font-size: 8px;
    color: #888;
    background-color: #d9d5cc;
}

.word-ctl {
    margin-left: 28px;
}

.ctl-first {
    margin-left: 21px;
}

.word-tabs {
    height: 25px;
    flex: none;
    padding: 0 18px 0 15px;
    display: flex;
    align-items: flex-end;
    gap: 17px;
    font-size: 9.7px;
    background-color: #2b579a;
}

.wt {
    height: 24px;
    padding-bottom: 2px;
    display: flex;
    align-items: center;
    white-space: nowrap;
}

.wt-file {
    margin-right: 10px;
}

.wt-on {
    margin: 0 -9px;
    padding: 0 9px 2px;
    color: #2b579a;
    background-color: #f1f1f1;
}

.bulb {
    margin-bottom: 6px;
    margin-left: 6px;
}

.wt-tell {
    margin-left: -8px;
    height: 24px;
    padding-bottom: 2px;
    display: flex;
    align-items: center;
}

.wt-share {
    margin-left: -13px;
    height: 24px;
    padding-bottom: 2px;
    display: flex;
    align-items: center;
}

.share-icon {
    margin-bottom: 7px;
}

.ribbon {
    height: 75px;
    flex: none;
    display: flex;
    color: #555;
    font-size: 9.5px;
    background-color: #f1f1f1;
    border-bottom: 1px solid #d8d8d8;
}

.rgroup {
    padding-top: 3px;
    display: flex;
    flex-direction: column;
    border-right: 1px solid #d0d0d0;
    margin-bottom: 1px;
}

.rg-items {
    flex: 1;
    display: flex;
}

.rg-label {
    text-align: center;
    font-size: 8.5px;
    line-height: 12px;
}

.rg-tools {
    width: 129px;
    padding-left: 2px;
}

.rg-pens {
    width: 246px;
    padding-left: 7px;
}

.rg-convert {
    width: 82px;
    padding-left: 5px;
}

.rg-insert {
    width: 54px;
}

.ritem {
    display: flex;
    flex-direction: column;
    align-items: center;
    text-align: center;
    line-height: 13.5px;
    white-space: nowrap;
}

.ritem svg {
    margin-bottom: -1px;
}

.ri-30 {
    width: 30px;
}

.ri-36 {
    width: 36px;
}

.ri-40 {
    width: 40px;
}

.ri-42 {
    width: 42px;
}

.ri-50 {
    width: 50px;
}

.pen {
    width: 40px;
    display: flex;
    justify-content: center;
}

.pen-on {
    position: relative;
    width: 39px;
    height: 51px;
    padding-top: 1px;
    background-color: #c9c8c4;
    border: 1px solid #b9b8b4;
}

.pen-arrow {
    position: absolute;
    right: 3px;
    bottom: 5px;
    font-size: 11px;
    line-height: 8px;
    color: #333;
}

.ink-math {
    overflow: visible;
}

.pi-big {
    font-family: 'Liberation Serif', serif;
    font-size: 24px;
    fill: #555;
}

.pi-small {
    font-family: 'Liberation Serif', serif;
    font-size: 14px;
    fill: #555;
}

.ribbon-up {
    margin: 65px 3px 0 0;
}

/* document page */
.doc {
    position: relative;
    height: 500px;
    flex: none;
    display: flex;
    background-color: #fff;
}

.ink {
    width: 1255px;
    height: 500px;
    overflow: visible;
}

.stroke {
    fill: none;
    stroke: #111;
    stroke-width: 2.4;
    stroke-linecap: round;
    stroke-linejoin: round;
}

.stroke-red {
    stroke: #e8291f;
}

.letters {
    font-family: 'Lato', 'Open Sans', sans-serif;
    font-style: italic;
    font-weight: 300;
    fill: #111;
    stroke: #111;
    stroke-width: .5px;
}

.letters-red {
    fill: #e8291f;
    stroke: #e8291f;
}

.cursor {
    position: absolute;
    left: 1257px;
    top: 406px;
}

.vscroll {
    width: 13px;
    display: flex;
    flex-direction: column;
    background-color: #d4d4d4;
}

.sb-btn {
    flex: none;
    height: 12px;
    margin: 3px 1px 0;
    display: flex;
    align-items: center;
    justify-content: center;
    font-size: 9px;
    color: #555;
    background-color: #fff;
}

.sb-thumb {
    flex: none;
    height: 14px;
    margin: 21px 1px 0;
    background-color: #fff;
}

.sb-down {
    position: relative;
    top: 20px;
    margin-top: 0;
    z-index: 1;
}

.graybar {
    height: 20px;
    flex: none;
    background: linear-gradient(to right, #e3e3e3 1255px, #d4d4d4 1255px);
}

.hscroll {
    height: 14px;
    flex: none;
    padding-right: 14px;
    display: flex;
    background-color: #f1f1f1;
    color: #555;
    font-size: 8px;
}

.hs-btn {
    width: 11px;
    display: flex;
    align-items: center;
    justify-content: center;
    background-color: #fff;
}

.hs-left {
    width: 157px;
    background-color: #d8d8d8;
}

.hs-thumb {
    width: 1015px;
    background-color: #fff;
}

.hs-right {
    flex: 1;
    background-color: #d8d8d8;
}

.word-status {
    height: 18px;
    flex: none;
    padding: 0 5px 0 5px;
    display: flex;
    align-items: center;
    font-size: 9px;
    color: #555;
    background-color: #f1f1f1;
}

.st-words {
    margin-left: 16px;
}

.st-book {
    margin-left: 15px;
}

.st-lang {
    margin-left: 15px;
}

.st-print {
    margin-left: 11px;
    width: 33px;
    height: 18px;
    display: flex;
    align-items: center;
    justify-content: center;
    background-color: #c9c9c9;
}

.st-web {
    margin-left: 11px;
}

.st-minus {
    margin-left: 11px;
    font-size: 12px;
}

.st-slider {
    position: relative;
    margin-left: 4px;
    width: 83px;
    height: 1px;
    background-color: #aaa;
}

.st-tick {
    position: absolute;
    left: 41px;
    top: -3px;
    width: 1px;
    height: 7px;
    background-color: #aaa;
}

.st-knob {
    position: absolute;
    left: 52px;
    top: -5px;
    width: 4px;
    height: 11px;
    background-color: #555;
}

.st-plus {
    margin-left: 4px;
    font-size: 12px;
}

.st-zoom {
    margin-left: 9px;
}

/* taskbar inside the shared screen */
.wintask {
    height: 33px;
    flex: none;
    display: flex;
    align-items: stretch;
    margin-right: 3px;
    background: linear-gradient(to right, #47181f 0, #4b1e22 25%, #4c2a1f 60%, #47231d 76%, #1f3a42 90%, #16343c 100%);
}

.wt-start {
    width: 39px;
    display: flex;
    align-items: center;
    justify-content: center;
    color: #fff;
}

.wt-search {
    width: 284px;
    padding-left: 10px;
    display: flex;
    align-items: center;
    gap: 10px;
    font-size: 12.5px;
    color: #333;
    background-color: #f0f0f0;
    border-bottom: 1px solid #cfcfcf;
}

.wt-icons {
    display: flex;
}

.wi {
    position: relative;
    width: 41px;
    display: flex;
    align-items: center;
    justify-content: center;
    color: #fff;
}

.wi-run {
    border-bottom: 2px solid #76a9d4;
}

.wi-word {
    background-color: #6d5a50;
}

.cortana {
    width: 22px;
    height: 22px;
    border-radius: 50%;
    border: 4px solid #111;
}

.cortana.small {
    width: 13px;
    height: 13px;
    border: 2px solid #fff;
}

.sigma {
    font-family: 'Liberation Sans', sans-serif;
    font-size: 24px;
    font-weight: 700;
    color: #2a8fe0;
}

.skype {
    width: 19px;
    height: 19px;
    display: flex;
    align-items: center;
    justify-content: center;
    border-radius: 50%;
    font-size: 14px;
    font-weight: 700;
    background-color: #1a9ae0;
}

.skype-num {
    position: absolute;
    left: 21px;
    top: 15px;
    width: 15px;
    height: 15px;
    display: flex;
    align-items: center;
    justify-content: center;
    border-radius: 50%;
    font-size: 9px;
    background-color: #444;
    border: 1px solid #aaa;
}

.word-logo {
    width: 18px;
    height: 18px;
    display: flex;
    align-items: center;
    justify-content: center;
    font-size: 9px;
    font-weight: 700;
    background: linear-gradient(to right, #185abd 50%, #41a5ee 50%);
}

.wt-tray {
    padding-right: 17px;
    display: flex;
    align-items: center;
    gap: 8.5px;
    color: #ddd;
}

.help {
    position: relative;
    width: 19px;
    height: 19px;
    margin-right: 2px;
    display: flex;
    align-items: center;
    justify-content: center;
    border-radius: 50%;
    font-size: 14px;
    font-weight: 700;
    color: #fff;
    background-color: #2a7fd0;
}

.help-dot {
    position: absolute;
    right: -3px;
    bottom: -2px;
    width: 9px;
    height: 9px;
    display: flex;
    align-items: center;
    justify-content: center;
    border-radius: 50%;
    font-size: 7px;
    background-color: #d93025;
}

.wt-eng {
    margin-left: 3px;
    font-size: 9.5px;
}

.wt-clock {
    margin-left: 2px;
    font-size: 10px;
    line-height: 14px;
    text-align: center;
    white-space: nowrap;
}

.wt-notif {
    position: relative;
    margin-left: 3px;
    width: 12px;
    height: 12px;
    background-color: #eee;
}

.notif-num {
    position: absolute;
    left: 3px;
    top: 4px;
    width: 13px;
    height: 13px;
    display: flex;
    align-items: center;
    justify-content: center;
    border-radius: 50%;
    font-size: 9px;
    border: 1px solid #ccc;
    background-color: #333;
}

.side {
    flex: 1;
    padding-top: 84px;
}

.tiles {
    height: 545px;
    display: grid;
    grid-template-columns: repeat(3, 217.33px);
    grid-template-rows: 182px 181px 182px;
    background-color: #202124;
}

.tile {
    padding-top: 58px;
    display: flex;
    flex-direction: column;
    align-items: center;
    gap: 15px;
    color: #fff;
}

.tile-line {
    position: relative;
}

.tile-line::after {
    content: "";
    position: absolute;
    left: 0;
    right: 0;
    bottom: 0;
    height: 1px;
    background-color: #111;
}

.ava {
    width: 66px;
    height: 66px;
    flex: none;
    display: flex;
    align-items: center;
    justify-content: center;
    border-radius: 50%;
    font-size: 32px;
}

.ava-speak {
    box-shadow: 0 0 0 4px #3c4043, 0 0 0 5px #5f6368, 0 0 0 17px #3c4043;
}

.ava-blue {
    background-color: #5c6bc0;
}

.ava-brown {
    background-color: #5d4037;
}

.ava-green {
    background-color: #33691e;
}

.ava-teal {
    background-color: #0097a7;
}

.ava-slate {
    background-color: #455a64;
}

.tname {
    align-self: stretch;
    height: 33px;
    padding-left: 10px;
    display: flex;
    align-items: center;
    gap: 9px;
    font-size: 17.6px;
    white-space: nowrap;
}

.tname span:last-child {
    padding-top: 2px;
}

.mute {
    width: 33px;
    height: 33px;
    flex: none;
    display: flex;
    align-items: center;
    justify-content: center;
    border-radius: 50%;
    background-color: #d93025;
}

.talk {
    width: 33px;
    flex: none;
    display: flex;
    align-items: center;
    justify-content: center;
    gap: 3px;
}

.talk i {
    width: 4px;
    height: 14px;
    border-radius: 2px;
    background-color: #5ef1d5;
}

.talk i:nth-child(2) {
    height: 20px;
}

/* meet controls */
.controls {
    height: 108px;
    flex: none;
    display: flex;
    align-items: center;
    background-color: #fff;
}

.code {
    width: 835px;
    padding-left: 30px;
    display: flex;
    align-items: center;
    gap: 17px;
    font-size: 22px;
    color: #3c4043;
}

.callbtns {
    display: flex;
    gap: 20px;
}

.cbtn {
    width: 70px;
    height: 70px;
    display: flex;
    align-items: center;
    justify-content: center;
    border-radius: 50%;
}

.cbtn-red {
    background-color: #d93025;
}

.cbtn-end {
    border: 1px solid #dadce0;
}

.act {
    display: flex;
    flex-direction: column;
    align-items: center;
    gap: 5px;
    font-size: 16.5px;
    letter-spacing: .45px;
    line-height: 22px;
    text-align: center;
    color: #4f5357;
}

.act-hand {
    margin-left: 210px;
    width: 140px;
    gap: 2px;
}

.act-cc {
    margin-left: 28px;
    width: 180px;
    gap: 3px;
}

.act-present {
    margin-left: 13px;
    width: 190px;
}

.cc-box {
    width: 24px;
    height: 22px;
    margin: 5px 0 2px;
    display: flex;
    align-items: center;
    justify-content: center;
    border: 2px solid #5f6368;
    border-radius: 2px;
    font-size: 10px;
    font-weight: 700;
    letter-spacing: 0;
    line-height: 1;
}

.ctl-more {
    margin-left: 34px;
}

/* windows taskbar */
.taskbar {
    height: 50px;
    flex: none;
    display: flex;
    align-items: center;
    background-color: #d5e4eb;
    color: #222;
}

.tb-start {
    width: 61px;
    display: flex;
    justify-content: center;
    color: #000;
}

.tb-search {
    width: 428px;
    height: 49px;
    padding-left: 13px;
    display: flex;
    align-items: center;
    gap: 12px;
    font-size: 19px;
    color: #333;
    background-color: #fff;
    border: 1px solid #c6ced2;
}

.tb-icons {
    height: 50px;
    display: flex;
}

.ti {
    width: 62px;
    height: 50px;
    display: flex;
    align-items: center;
    justify-content: center;
}

.ti-on {
    background-color: #eaf1f5;
    border-bottom: 4px solid #0a6fc6;
}

.dell {
    width: 30px;
    height: 30px;
    display: flex;
    align-items: center;
    justify-content: center;
    font-size: 8px;
    font-weight: 700;
    color: #fff;
    background-color: #0a74b8;
}

.tb-tray {
    padding-right: 29px;
    display: flex;
    align-items: center;
    gap: 13px;
}

.tb-eng {
    margin-left: 2px;
    font-size: 14px;
}

.tb-clock {
    margin-left: 2px;
    font-size: 15px;
    line-height: 23px;
    text-align: center;
    white-space: nowrap;
}

.tb-notif {
    position: relative;
    margin-left: 11px;
    width: 20px;
    height: 24px;
    background-color: #000;
}

.tb-notif-num {
    position: absolute;
    left: 9px;
    top: 10px;
    width: 20px;
    height: 20px;
    display: flex;
    align-items: center;
    justify-content: center;
    border-radius: 50%;
    font-size: 15px;
    border: 1px solid #555;
    background-color: #d5e4eb;
}
```
